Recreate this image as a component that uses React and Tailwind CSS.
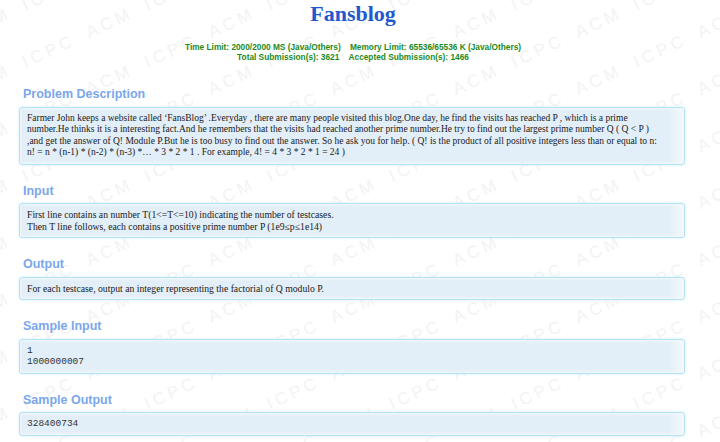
import React from "react";

const unit = "ICPC ACM ";
const lineText = unit.repeat(9);
const lines = [];
for (let b = -2; b <= 13; b++) {
  lines.push({ left: -219, top: 125 + 57 * b - 14 });
}

function Watermark() {
  return (
    <div aria-hidden="true" className="pointer-events-none absolute inset-0 overflow-hidden">
      {lines.map((l, i) => (
        <span
          key={i}
          className="absolute origin-[0_14px] -rotate-[25deg] whitespace-pre font-['Liberation_Sans',Arial,sans-serif] text-[17px] leading-[17px] tracking-[4px] [word-spacing:6px] text-[#f3f3f3]"
          style={{ left: l.left, top: l.top }}
        >
          {lineText}
        </span>
      ))}
    </div>
  );
}

function Section({ title, first, children, mono, small }) {
  return (
    <section>
      <h2
        className={`${first ? "mt-[24px]" : "mt-[18px]"} mb-[4.5px] ml-[4px] font-['Liberation_Sans',Arial,sans-serif] text-[12.5px] font-bold leading-[16px] text-[#7ba7ec]`}
      >
        {title}
      </h2>
      <div
        className={`rounded-[3px] border border-[#b2e2f4] bg-[linear-gradient(to_right,#e2eef8_calc(100%-16px),#f3f9fd)] pl-[7px] pr-[4px] py-[5px] shadow-[0_0_3px_#d4f0fb,inset_0_1px_3px_#f4f9fd,inset_0_-1px_3px_#f4f9fd] ${
          mono
            ? "font-['Liberation_Mono','Courier_New',monospace] text-[9.5px] leading-[11.5px] text-[#333]"
            : small
            ? "font-['Liberation_Serif','Times_New_Roman',serif] text-[9.5px] leading-[11.5px] text-[#1a1a1a]"
            : "font-['Liberation_Serif','Times_New_Roman',serif] text-[9.7px] leading-[11.5px] text-[#1a1a1a]"
        }`}
      >
        {children}
      </div>
    </section>
  );
}

const desc = [
  "Farmer John keeps a website called ‘FansBlog’ .Everyday , there are many people visited this blog.One day, he find the visits has reached P , which is a prime",
  "number.He thinks it is a interesting fact.And he remembers that the visits had reached another prime number.He try to find out the largest prime number Q ( Q < P )",
  ",and get the answer of Q! Module P.But he is too busy to find out the answer. So he ask you for help. ( Q! is the product of all positive integers less than or equal to n:",
  "n! = n * (n-1) * (n-2) * (n-3) *… * 3 * 2 * 1 . For example, 4! = 4 * 3 * 2 * 1 = 24 )",
];

export default function App() {
  return (
    <div className="relative min-h-[442px] w-[720px] overflow-hidden bg-white">
      <Watermark />
      <div className="relative pb-[6px]">
        <h1 className="pr-[14px] pt-[1px] text-center font-['Liberation_Serif','Times_New_Roman',serif] text-[22px] font-bold leading-[26px] text-[#1f58cf]">
          Fansblog
        </h1>
        <div className="mt-[15px] pr-[14px] text-center font-['Liberation_Sans',Arial,sans-serif] text-[8.3px] font-bold leading-[10px] text-[#1d8a1d]">
          <div>
            Time Limit: 2000/2000 MS (Java/Others)&nbsp;&nbsp;&nbsp;&nbsp;Memory Limit: 65536/65536 K (Java/Others)
          </div>
          <div>
            Total Submission(s): 3621&nbsp;&nbsp;&nbsp;&nbsp;Accepted Submission(s): 1466
          </div>
        </div>
        <div className="ml-[19px] w-[666px]">
          <Section title="Problem Description" first small>
            {desc.map((t, i) => (
              <div key={i} className="whitespace-nowrap">{t}</div>
            ))}
          </Section>
          <Section title="Input">
            First line contains an number T(1&lt;=T&lt;=10) indicating the number of testcases.
            <br />
            Then T line follows, each contains a positive prime number P (1e9≤p≤1e14)
          </Section>
          <Section title="Output">
            For each testcase, output an integer representing the factorial of Q modulo P.
          </Section>
          <Section title="Sample Input" mono>
            1
            <br />
            1000000007
          </Section>
          <Section title="Sample Output" mono>
            328400734
          </Section>
        </div>
      </div>
    </div>
  );
}
